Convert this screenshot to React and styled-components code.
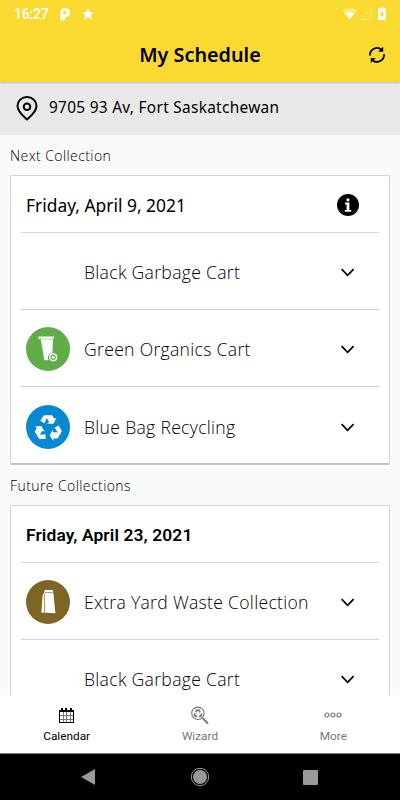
import React from 'react';
import styled, { createGlobalStyle } from 'styled-components';

const GlobalStyle = createGlobalStyle`
	* {
		box-sizing: border-box;
	}
	body {
		margin: 0;
		background: #f9fbfa;
		font-family: 'Noto Sans', 'Open Sans', sans-serif;
		color: #000;
	}
	svg {
		display: block;
		flex: none;
	}
`;

const Screen = styled.div`
	display: flex;
	flex-direction: column;
	width: 400px;
	height: 800px;
	overflow: hidden;
`;

const TopArea = styled.header`
	flex: none;
	height: 82px;
	background: #fada31;
	z-index: 1;
	box-shadow: 0 1px 2px rgba(0, 0, 0, 0.2);
`;

const StatusBar = styled.div`
	display: flex;
	align-items: center;
	justify-content: space-between;
	height: 28px;
	padding: 0 14px;
	color: #fff;
`;

const StatusGroup = styled.div`
	display: flex;
	align-items: center;
	gap: ${(props) => props.$gap}px;
`;

const Clock = styled.span`
	font: 500 14px/28px Roboto, sans-serif;
	width: 35px;
	letter-spacing: -0.2px;
	white-space: nowrap;
`;

const TitleBar = styled.div`
	display: grid;
	grid-template-columns: 46px 1fr 46px;
	align-items: center;
	justify-items: center;
	height: 54px;
`;

const Title = styled.h1`
	grid-column: 2;
	margin: 0;
	font: 600 19.8px/54px 'Noto Sans', sans-serif;
`;

const AddressBar = styled.div`
	flex: none;
	display: flex;
	align-items: center;
	gap: 11px;
	height: 53px;
	padding: 0 16px 1px;
	background: #e9e9e9;
	font: 400 15.4px/20px 'Noto Sans', sans-serif;
	letter-spacing: 0.3px;
`;

const Content = styled.main`
	flex: 1;
	min-height: 0;
	overflow: hidden;
	padding: 0 10px;
`;

const SectionLabel = styled.h2`
	margin: 0;
	height: 40px;
	font-family: 'Open Sans', sans-serif;
	font-size: 14px;
	font-weight: 300;
	line-height: 41px;
	letter-spacing: 0.42px;
`;

const Card = styled.section`
	height: 290px;
	padding: 0 10px;
	background: #fff;
	border: 1px solid #d3d5d4;
	border-bottom: 2px solid #c3c5c4;
	border-radius: 2px;
`;

const DateRow = styled.div`
	display: flex;
	align-items: center;
	justify-content: space-between;
	height: 57px;
	padding: 2px 20px 0 5px;
	border-bottom: 1px solid #d9d9d9;
`;

const DateText = styled.span`
	font-family: ${(props) => (props.$bold ? 'Roboto' : "'Noto Sans'")}, sans-serif;
	font-size: 17.4px;
	font-weight: ${(props) => (props.$bold ? 600 : 400)};
	letter-spacing: ${(props) => (props.$bold ? 0.12 : 0)}px;
`;

const Row = styled.div`
	display: flex;
	align-items: center;
	height: ${(props) => (props.$last ? 78 : 77)}px;
	padding: 2px 24px 0 5px;
	border-bottom: ${(props) => (props.$last ? 'none' : '1px solid #d3d3d3')};
`;

const Badge = styled.div`
	flex: none;
	width: 44px;
	height: 44px;
	border-radius: 50%;
	background: ${(props) => props.$color || 'transparent'};
`;

const RowText = styled.span`
	flex: 1;
	padding-left: 14px;
	font-family: 'Open Sans', sans-serif;
	font-size: 17.6px;
	font-weight: 300;
	letter-spacing: 0.3px;
	white-space: nowrap;
`;

const TabBar = styled.nav`
	flex: none;
	display: grid;
	grid-template-columns: repeat(3, 1fr);
	height: 58px;
	background: #fff;
`;

const Tab = styled.div`
	display: flex;
	flex-direction: column;
	align-items: center;
	padding-top: 10px;
	color: ${(props) => (props.$active ? '#000' : '#777')};
	font: 400 11.8px/16px Roboto, sans-serif;
`;

const TabIcon = styled.div`
	display: flex;
	align-items: center;
	height: 20px;
	margin-bottom: 3px;
`;

const SystemNav = styled.div`
	flex: none;
	display: flex;
	align-items: center;
	justify-content: space-between;
	height: 47px;
	padding: 0 82px 0 80px;
	border-top: 1px solid #777;
	background: #000;
`;

const ParkingIcon = () => (
	<svg width="11" height="13" viewBox="0 0 11 13">
		<path
			fill="#fff"
			fillRule="evenodd"
			d="M1 1.2Q2.5 .3 5.3 .3C8.6 .3 10.2 2.2 10.2 4.8S8.4 9.2 5.2 9.2Q5.2 12.5 2.6 12.5H.4V4.6ZM3.2 4.8A1.7 1.7 0 1 0 6.6 4.8A1.7 1.7 0 1 0 3.2 4.8Z"
		/>
	</svg>
);

const StarIcon = () => (
	<svg width="12" height="12" viewBox="0 0 12 12">
		<path fill="#fff" d="M6 0L7.6 4 12 4.4 8.7 7.2 9.7 11.6 6 9.3 2.3 11.6 3.3 7.2 0 4.4 4.4 4Z" />
	</svg>
);

const SignalIcons = () => (
	<svg width="45" height="14" viewBox="0 0 45 14">
		<path fill="#fff" opacity=".35" d="M1.4 3.2Q8.6-1.8 15.8 3.2L8.6 12.3Z" />
		<path fill="#fff" d="M4 6.4Q8.6 3.8 13.2 6.4L8.6 12.3Z" />
		<path fill="none" stroke="#fff" opacity=".4" d="M29.7 2.2V12.5H19.5Z" />
		<path
			fill="#fff"
			fillRule="evenodd"
			d="M39 .5H42.8V1.5H44.8V13H37V1.5H39ZM41.7 3.2L38.8 7.8H40.4V11.4L43.2 6.8H41.7Z"
		/>
	</svg>
);

const RefreshIcon = () => (
	<svg width="18" height="18" viewBox="0 0 18 18">
		<g fill="none" stroke="#000" strokeWidth="1.8">
			<path d="M2 9.5A7 7 0 0 1 13.5 3.6" />
			<path d="M16 8.2A7 7 0 0 1 4.5 14.2" />
		</g>
		<path d="M15.2.8V5.8H10.2ZM2.8 17V12H7.8Z" />
	</svg>
);

const PinIcon = () => (
	<svg width="22" height="25" viewBox="0 0 22 25" fill="none" stroke="#000" strokeWidth="2">
		<path d="M11 23.5C8 20.5 1.5 16 1.5 10A9.5 9 0 0 1 20.5 10C20.5 16 14 20.5 11 23.5Z" strokeLinejoin="round" />
		<circle cx="11" cy="10.7" r="3.3" />
	</svg>
);

const InfoIcon = () => (
	<svg width="22" height="22" viewBox="0 0 22 22">
		<circle cx="11" cy="11" r="11" />
		<circle cx="10.9" cy="5.8" r="1.6" fill="#fff" />
		<path fill="#fff" d="M8 8.6H12.4V16H14.2V17.8H7.8V16H9.6V10.4H8Z" />
	</svg>
);

const ChevronIcon = () => (
	<svg width="14" height="9" viewBox="0 0 14 9">
		<path d="M.6 1.2L6.6 7.4 12.6 1.2" fill="none" stroke="#000" strokeWidth="1.7" />
	</svg>
);

const CartIcon = () => (
	<svg width="44" height="44" viewBox="0 0 44 44">
		<path fill="#fff" d="M12.5 9.5H27.8V11.8H27L26.4 26A4.8 4.8 0 0 0 22.6 33.3H18.4L14.7 12H12.5Z" />
		<path stroke="#5fad46" strokeWidth=".5" d="M14 12H27" />
		<circle cx="27.2" cy="30.3" r="3.4" fill="none" stroke="#fff" strokeWidth="1.4" />
		<circle cx="27.2" cy="30.3" r="1.5" fill="#fff" />
	</svg>
);

const RecycleIcon = () => (
	<svg width="44" height="44" viewBox="0 0 44 44" fill="#fff">
		{[0, 120, 240].map((angle) => (
			<g key={angle} transform={`rotate(${angle} 22.2 23.4)`}>
				<path d="M14.4 15.8L17.6 10.4H22L18.4 18.2Z" />
				<path d="M19.2 10.2H26.2L28.3 13.8 30.5 12.6 27.6 18.7H20.8L23.2 17.2Z" />
			</g>
		))}
	</svg>
);

const YardBagIcon = () => (
	<svg width="44" height="44" viewBox="0 0 44 44">
		<path fill="#fff" d="M18.5 10H27L27.4 13 29.4 33.2 15.4 32.6 16.5 16 18.2 12Z" />
		<path fill="none" stroke="#7d6524" strokeWidth=".7" d="M18.3 12.2L27.4 12.9M18.8 13.5C17.5 19 19.2 26 18.5 32.5" />
	</svg>
);

const CalendarIcon = () => (
	<svg width="15" height="17" viewBox="0 0 15 17" shapeRendering="crispEdges">
		<path d="M0 3H2V1H4V3H6V1H8V3H11V1H13V3H15V5H0Z" />
		<path fill="none" stroke="#000" d="M.5 5V15.5H14.5V5" />
		<path fill="none" stroke="#777" d="M1 8.5H14M1 12.5H14M4.5 5V15M7.5 5V15M11.5 5V15" />
	</svg>
);

const WizardIcon = () => (
	<svg width="18" height="19" viewBox="0 0 18 19" fill="none" stroke="#777">
		<circle cx="6.9" cy="7.3" r="6.2" strokeWidth="1.1" />
		<path strokeWidth="1.7" d="M4.7 6.2L6 4.2H7.8L9.2 6.2M10 7.5L10.6 9 9.4 10.4H7.8M6.2 10.4H4.5L3.5 8.9 4.3 7.4" />
		<path strokeWidth="2" d="M11.8 12.2L17 17.6" />
	</svg>
);

const MoreIcon = () => (
	<svg width="18" height="6" viewBox="0 0 18 6" fill="none" stroke="#777" strokeWidth="1.2">
		<circle cx="3" cy="3" r="2" />
		<circle cx="9" cy="3" r="2" />
		<circle cx="15" cy="3" r="2" />
	</svg>
);

const badges = {
	organics: { color: '#5fad46', icon: <CartIcon /> },
	recycling: { color: '#0689d3', icon: <RecycleIcon /> },
	yard: { color: '#7d6524', icon: <YardBagIcon /> }
};

const CollectionRow = ({ name, type, last }) => {
	const badge = badges[type];
	return (
		<Row $last={last}>
			<Badge $color={badge && badge.color}>{badge && badge.icon}</Badge>
			<RowText>{name}</RowText>
			<ChevronIcon />
		</Row>
	);
};

export default function App() {
	return (
		<Screen>
			<GlobalStyle />
			<TopArea>
				<StatusBar>
					<StatusGroup $gap={11}>
						<Clock>16:27</Clock>
						<ParkingIcon />
						<StarIcon />
					</StatusGroup>
					<SignalIcons />
				</StatusBar>
				<TitleBar>
					<Title>My Schedule</Title>
					<RefreshIcon />
				</TitleBar>
			</TopArea>
			<AddressBar>
				<PinIcon />
				<span>9705 93 Av, Fort Saskatchewan</span>
			</AddressBar>
			<Content>
				<SectionLabel>Next Collection</SectionLabel>
				<Card>
					<DateRow>
						<DateText>Friday, April 9, 2021</DateText>
						<InfoIcon />
					</DateRow>
					<CollectionRow name="Black Garbage Cart" />
					<CollectionRow name="Green Organics Cart" type="organics" />
					<CollectionRow name="Blue Bag Recycling" type="recycling" last />
				</Card>
				<SectionLabel>Future Collections</SectionLabel>
				<Card>
					<DateRow>
						<DateText $bold>Friday, April 23, 2021</DateText>
					</DateRow>
					<CollectionRow name="Extra Yard Waste Collection" type="yard" />
					<CollectionRow name="Black Garbage Cart" />
				</Card>
			</Content>
			<TabBar>
				<Tab $active>
					<TabIcon>
						<CalendarIcon />
					</TabIcon>
					Calendar
				</Tab>
				<Tab>
					<TabIcon>
						<WizardIcon />
					</TabIcon>
					Wizard
				</Tab>
				<Tab>
					<TabIcon>
						<MoreIcon />
					</TabIcon>
					More
				</Tab>
			</TabBar>
			<SystemNav>
				<svg width="16" height="18" viewBox="0 0 16 18">
					<path fill="#999" d="M15 1V17L1 9Z" />
				</svg>
				<svg width="20" height="20" viewBox="0 0 20 20">
					<circle cx="10" cy="10" r="8.7" fill="none" stroke="#999" strokeWidth="1" />
					<circle cx="10" cy="10" r="7" fill="#999" />
				</svg>
				<svg width="15" height="15" viewBox="0 0 15 15">
					<rect width="15" height="15" rx="1" fill="#999" />
				</svg>
			</SystemNav>
		</Screen>
	);
}
